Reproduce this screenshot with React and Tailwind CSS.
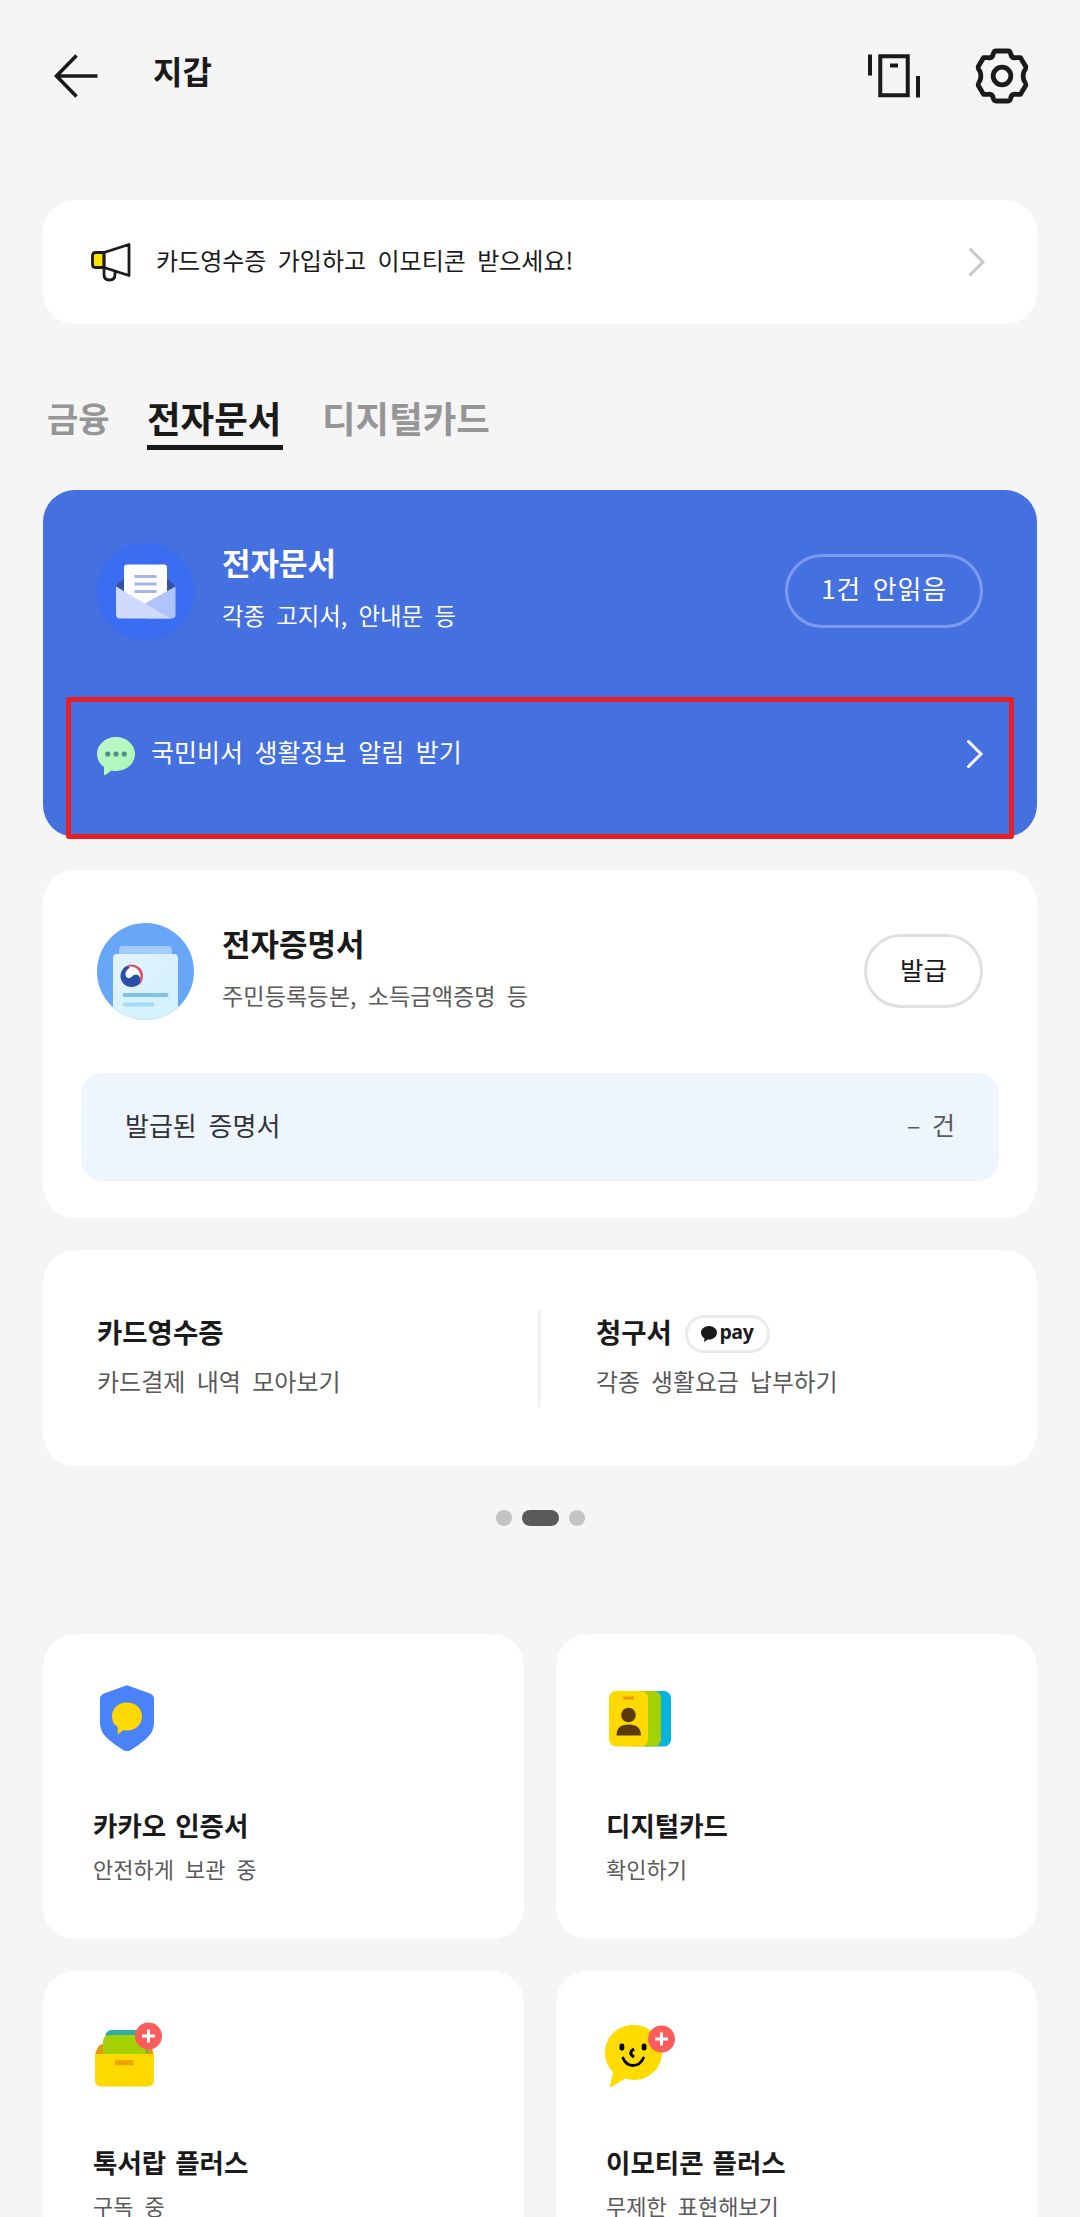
import React from "react";

const BackIcon = () => (
  <svg width="44" height="44" viewBox="0 0 44 44" fill="none" stroke="#1a1a1a" strokeWidth="3.6">
    <path d="M22.5 1.5 2.5 22l20 20.5M3 22h40.500" />
  </svg>
);

const RotateCardIcon = () => (
  <svg width="52" height="44" viewBox="0 0 52 44" fill="none" stroke="#1a1a1a" strokeWidth="4">
    <path d="M2 .5v21M50 22v21.500M22 11.500h8" />
    <rect x="12.250" y="2.250" width="27.500" height="39" />
  </svg>
);

const GearIcon = () => (
  <svg width="56" height="56" viewBox="-28 -28 56 56" fill="none" stroke="#1a1a1a" strokeWidth="4.800" strokeLinejoin="round">
    <path d="M-6-25H6Q8-25 8.600-22.500 9.500-17.500 14-18.300H18.500L23.700-9.500Q24.300-8 22-4.500 20.300 0 22 4.500 24.300 8 23.700 9.500L18.500 18.300H14Q9.500 17.500 8.600 22.500 8 25 6 25H-6Q-8 25-8.600 22.500-9.500 17.500-14 18.300H-18.500L-23.700 9.500Q-24.300 8-22 4.500-20.300 0-22-4.500-24.300-8-23.700-9.500L-18.500-18.300H-14Q-9.500-17.500-8.600-22.500-8-25-6-25Z" />
    <circle r="8.800" />
  </svg>
);

const MegaphoneIcon = () => (
  <svg width="42" height="42" viewBox="0 0 42 42" fill="none" stroke="#1a1a1a" strokeWidth="2.800" strokeLinejoin="round">
    <path d="M14 11.500H5.500q-3 0-3 3v9q0 3 3 3H14z" fill="#ffe100" />
    <path d="M14 11.500 39 3.500v31L14 26.500zM14 26.500v7q0 5.500 5.500 5.500t5.500-5.500v-3" />
  </svg>
);

const Chevron = ({ className }) => (
  <svg className={className} width="18" height="30" viewBox="0 0 18 30" fill="none" stroke="currentColor" strokeWidth="3" strokeLinecap="round">
    <path d="M2.500 2.500 15 15 2.500 27.500" />
  </svg>
);

const EnvelopeIcon = () => (
  <svg width="97" height="97" viewBox="0 0 97 97">
    <circle cx="48.500" cy="48.500" r="48.500" fill="#3b6df2" />
    <path d="M19 44q0-3 8-8h43q8 5 8 8L48 62z" fill="#3553a5" />
    <rect x="27" y="21.500" width="43" height="45" rx="3" fill="#fff" />
    <path d="M37.500 33.500h22M37.500 41h22M37.500 48.500h22" stroke="#a3b5e9" strokeWidth="3" />
    <path d="M78.500 43.500v28q0 4-4 4H50l-4-14z" fill="#afc4ff" />
    <path d="M19 43.500v28q0 4 4 4h51q-2-1-5-2.500z" fill="#cfdaff" />
  </svg>
);

const TalkIcon = () => (
  <svg width="38" height="38" viewBox="0 0 38 38" className="mt-[5px]">
    <defs>
      <linearGradient id="talk" x2="1" y2="1">
        <stop stopColor="#c2f5cc" />
        <stop offset="1" stopColor="#a7fab1" />
      </linearGradient>
    </defs>
    <path d="M19 0c10.500 0 19 7.500 19 17s-8.500 17-19 17q-2.500 0-4.500-.5L8.500 38q-1.500.5-1.500-1v-7Q0 25 0 17C0 7.500 8.500 0 19 0Z" fill="url(#talk)" />
    <g fill="#4e8f89">
      <circle cx="10.700" cy="17" r="2.600" />
      <circle cx="19" cy="17" r="2.600" />
      <circle cx="27.300" cy="17" r="2.600" />
    </g>
  </svg>
);

const CertificateIcon = () => (
  <svg width="97" height="97" viewBox="0 0 97 97">
    <defs>
      <clipPath id="cert-clip">
        <circle cx="48.500" cy="48.500" r="48.500" />
      </clipPath>
      <linearGradient id="cert-paper" x2="1" y2="1">
        <stop stopColor="#e3f3ff" />
        <stop offset="1" stopColor="#cff0fd" />
      </linearGradient>
    </defs>
    <g clipPath="url(#cert-clip)">
      <path d="M0 0h97v97H0z" fill="#68a6f8" />
      <rect x="22" y="23" width="53" height="20" rx="4" fill="#a3cbfb" />
      <rect x="16" y="31" width="65" height="70" rx="4" fill="url(#cert-paper)" />
      <circle cx="35" cy="52.500" r="11" fill="#fff" />
      <path d="M25.500 47A11 11 0 0 1 46 52.500q0 7-5 10 3-5 2.500-10Q42 44 34 43.500q-5 0-8.500 3.500Z" fill="#dc4a63" />
      <path d="M29 43.500A11 11 0 1 0 43 60q1.500-8-4-8.500-3 0-4.500 2.500-3 2.500-5.500-.5-2.500-4.500 4-9-2-1.500-4-1Z" fill="#2850a8" />
      <path d="M27.500 72h42" stroke="#7fc4e6" strokeWidth="4" strokeLinecap="round" />
      <path d="M27.500 81.500h28" stroke="#a4dcf7" strokeWidth="4" strokeLinecap="round" />
    </g>
  </svg>
);

const ShieldIcon = () => (
  <svg width="54" height="66" viewBox="0 0 54 66">
    <path d="M25.500.7q1.500-.7 3 0L50 8.500q4 1.500 4 5.500v24q0 9-8 16-7 6-15 11-4 2.500-8 0-8-5-15-11-8-7-8-16V14q0-4 4-5.500z" fill="#4a82fa" />
    <path d="M27 17.500c8.500 0 15 6 15 14s-6.500 14-15 14q-2 0-3.500-.5l-5 4q-.8.500-.8-.5v-6.500Q12 38.500 12 31.500c0-8 6.500-14 15-14Z" fill="#fed900" />
  </svg>
);

const IdCardsIcon = () => (
  <svg width="62" height="56" viewBox="0 0 62 56">
    <rect x="30" width="32" height="55.500" rx="7" fill="#06b4dd" />
    <rect x="15" width="37" height="55.500" rx="7" fill="#a3d103" />
    <rect width="39" height="55.500" rx="7" fill="#fed900" />
    <path d="M14 7h11" stroke="#e5a105" strokeWidth="3" />
    <circle cx="19.500" cy="24" r="7.300" fill="#5a390a" />
    <path d="M7.500 44.500q0-11 12.200-11t12.300 11z" fill="#5a390a" />
  </svg>
);

const PlusBadge = ({ cx, cy }) => (
  <g>
    <circle cx={cx} cy={cy} r="13.500" fill="#fc5c5c" />
    <path d={`M${cx - 6.5} ${cy}h13M${cx} ${cy - 6.5}v13`} stroke="#fff" strokeWidth="3" />
  </g>
);

const DrawerIcon = () => (
  <svg width="70" height="66" viewBox="0 0 70 66">
    <path d="M0 34q2-12 8-12h43q6 0 8 12z" fill="#e09a12" />
    <rect x="10.500" y="8" width="42" height="26" rx="6" fill="#2eada6" />
    <path d="M8 34V20q0-7 7-7h29q7 0 7 7v14z" fill="#a3d103" />
    <path d="M0 32h59v26q0 6.500-6.500 6.500h-46Q0 64.500 0 58z" fill="#fed900" />
    <path d="M20 40.700h18.500" stroke="#eaa303" strokeWidth="5" />
    <PlusBadge cx={53.5} cy={14} />
  </svg>
);

const EmoticonIcon = () => (
  <svg width="70" height="63" viewBox="0 0 70 63">
    <path d="M28 0a28 27.500 0 1 1-8 53.500L6.500 62q-2 1-1.500-1l3.200-14A28 27.500 0 0 1 28 0Z" fill="#ffdc00" />
    <rect x="14.500" y="18.500" width="4.800" height="7" rx="2.200" />
    <rect x="36.700" y="18.500" width="4.800" height="7" rx="2.200" />
    <path d="M29 24q-6.500 4 0 8" fill="none" stroke="#000" strokeWidth="3" />
    <path d="M18 33q3 7.500 10 7.500T38.500 33" fill="none" stroke="#000" strokeWidth="2.800" strokeLinecap="round" />
    <PlusBadge cx={56.5} cy={14} />
  </svg>
);

const services = [
  { title: "카카오 인증서", sub: "안전하게 보관 중", icon: <ShieldIcon />, iconClass: "pt-[51px] pl-[7px]" },
  { title: "디지털카드", sub: "확인하기", icon: <IdCardsIcon />, iconClass: "pt-[57px] pl-[3px]" },
  { title: "톡서랍 플러스", sub: "구독 중", icon: <DrawerIcon />, iconClass: "pt-[51px] pl-[2px]" },
  { title: "이모티콘 플러스", sub: "무제한 표현해보기", icon: <EmoticonIcon />, iconClass: "pt-[54px] -ml-[1px]" },
];

const ServiceTile = ({ title, sub, icon, iconClass }) => (
  <div className="h-[305px] rounded-[32px] bg-white pl-[50px]">
    <div className={`h-[171px] ${iconClass}`}>{icon}</div>
    <h3 className="text-[26.500px] leading-[40px] font-bold [word-spacing:3px]">{title}</h3>
    <p className="mt-[7px] text-[22px] leading-[32px] text-[#5a5a5a]">{sub}</p>
  </div>
);

const App = () => {
  return (
    <div className="h-[2217px] w-[1080px] overflow-hidden bg-[#f5f5f5] font-['Noto_Sans_CJK_KR','Noto_Sans_CJK_SC',sans-serif] text-[#1a1a1a] [word-spacing:6px]">
      <header className="flex h-[151px] items-center pr-[50px] pl-[54px]">
        <BackIcon />
        <h1 className="ml-[55px] pb-[11px] text-[32px] leading-none font-bold">지갑</h1>
        <div className="ml-auto flex items-center gap-[54px]">
          <RotateCardIcon />
          <GearIcon />
        </div>
      </header>

      <main className="px-[43px] pt-[49px]">
        <div className="flex h-[124px] items-center rounded-[32px] bg-white pr-[51px] pl-[47px]">
          <MegaphoneIcon />
          <p className="ml-[24px] pb-[4px] text-[24px] leading-none">카드영수증 가입하고 이모티콘 받으세요!</p>
          <Chevron className="ml-auto text-[#c8c8c8]" />
        </div>

        <nav className="mt-[66px] flex h-[60px] pl-[4px] text-[36.500px] leading-[56px] font-bold whitespace-nowrap text-[#969696]">
          <span className="w-[100px] text-[34px]">금융</span>
          <span className="w-[136px] border-b-[5px] border-[#1a1a1a] text-[#1a1a1a]">전자문서</span>
          <span className="ml-[39px]">디지털카드</span>
        </nav>

        <section className="relative mt-[40px] h-[347px] rounded-[32px] bg-[#4570df] text-white">
          <div className="flex h-[203px] items-center px-[54px]">
            <EnvelopeIcon />
            <div className="ml-[28px] pb-[11px]">
              <h2 className="text-[31px] leading-[44px] font-bold">전자문서</h2>
              <p className="mt-[14px] text-[23.400px] leading-[34px]">각종 고지서, 안내문 등</p>
            </div>
            <button className="mb-[2px] ml-auto h-[74px] w-[198px] rounded-full border-[3px] border-[#7d9af0] pb-[5px] text-[26px] leading-none tracking-[0.8px] [word-spacing:5px]">
              1건 안읽음
            </button>
          </div>
          <div className="flex h-[121px] items-center pr-[53px] pl-[54px]">
            <TalkIcon />
            <p className="ml-[16px] pb-[5px] text-[25px] leading-none">국민비서 생활정보 알림 받기</p>
            <Chevron className="ml-auto" />
          </div>
          <div className="absolute top-[207px] left-[23px] h-[142px] w-[948px] rounded-[3px] border-[5px] border-[#e81f27]" />
        </section>

        <section className="mt-[33px] h-[348px] rounded-[32px] bg-white px-[38px]">
          <div className="flex h-[203px] items-center px-[16px]">
            <CertificateIcon />
            <div className="ml-[28px] pb-[10px]">
              <h2 className="text-[31px] leading-[44px] font-bold">전자증명서</h2>
              <p className="mt-[13px] text-[23.200px] leading-[34px] text-[#5a5a5a]">주민등록등본, 소득금액증명 등</p>
            </div>
            <button className="mb-[2px] ml-auto h-[74px] w-[119px] rounded-full border-[3px] border-[#e0e0e0] pb-[4px] text-[25.500px] leading-none">
              발급
            </button>
          </div>
          <div className="flex h-[108px] items-center justify-between rounded-[21px] bg-[#edf5ff] pr-[44px] pb-[5px] pl-[44px] text-[26px] leading-none">
            <span className="text-[#333]">발급된 증명서</span>
            <span className="text-[25px] text-[#5a5a5a]">– 건</span>
          </div>
        </section>

        <section className="mt-[32px] flex h-[216px] items-center rounded-[32px] bg-white">
          <div className="w-[495px] pb-[7px] pl-[54px]">
            <h2 className="text-[27.500px] leading-[40px] font-bold">카드영수증</h2>
            <p className="mt-[13px] text-[24px] leading-[34px] text-[#5a5a5a]">카드결제 내역 모아보기</p>
          </div>
          <div className="h-[97px] w-[3px] bg-[#f2f2f2]" />
          <div className="pb-[7px] pl-[55px]">
            <div className="flex h-[40px] items-center">
              <h2 className="text-[27.500px] leading-[40px] font-bold">청구서</h2>
              <span className="mt-[5px] ml-[13px] flex h-[38px] w-[85px] items-center justify-center gap-[2px] rounded-full border-[3px] border-[#ebebeb]">
                <svg width="16" height="16" viewBox="0 0 16 16">
                  <path d="M8 0c4.500 0 8 3 8 6.700s-3.500 6.800-8 6.800H6.800L3 16l.5-3.700Q0 10 0 6.700C0 3 3.500 0 8 0Z" fill="#1a1a1a" />
                </svg>
                <span className="pb-[4px] font-['Open_Sans',sans-serif] text-[19.500px] leading-none font-bold tracking-[-0.4px]">pay</span>
              </span>
            </div>
            <p className="mt-[13px] text-[23.800px] leading-[34px] text-[#5a5a5a]">각종 생활요금 납부하기</p>
          </div>
        </section>

        <div className="mt-[44px] flex justify-center gap-[10px]">
          <span className="h-[16px] w-[16px] rounded-full bg-[#c4c4c4]" />
          <span className="h-[16px] w-[37px] rounded-full bg-[#5a5a5a]" />
          <span className="h-[16px] w-[16px] rounded-full bg-[#c4c4c4]" />
        </div>

        <div className="mt-[108px] grid grid-cols-2 gap-[32px]">
          {services.map((service) => (
            <ServiceTile key={service.title} {...service} />
          ))}
        </div>
      </main>
    </div>
  );
};

export default App;
